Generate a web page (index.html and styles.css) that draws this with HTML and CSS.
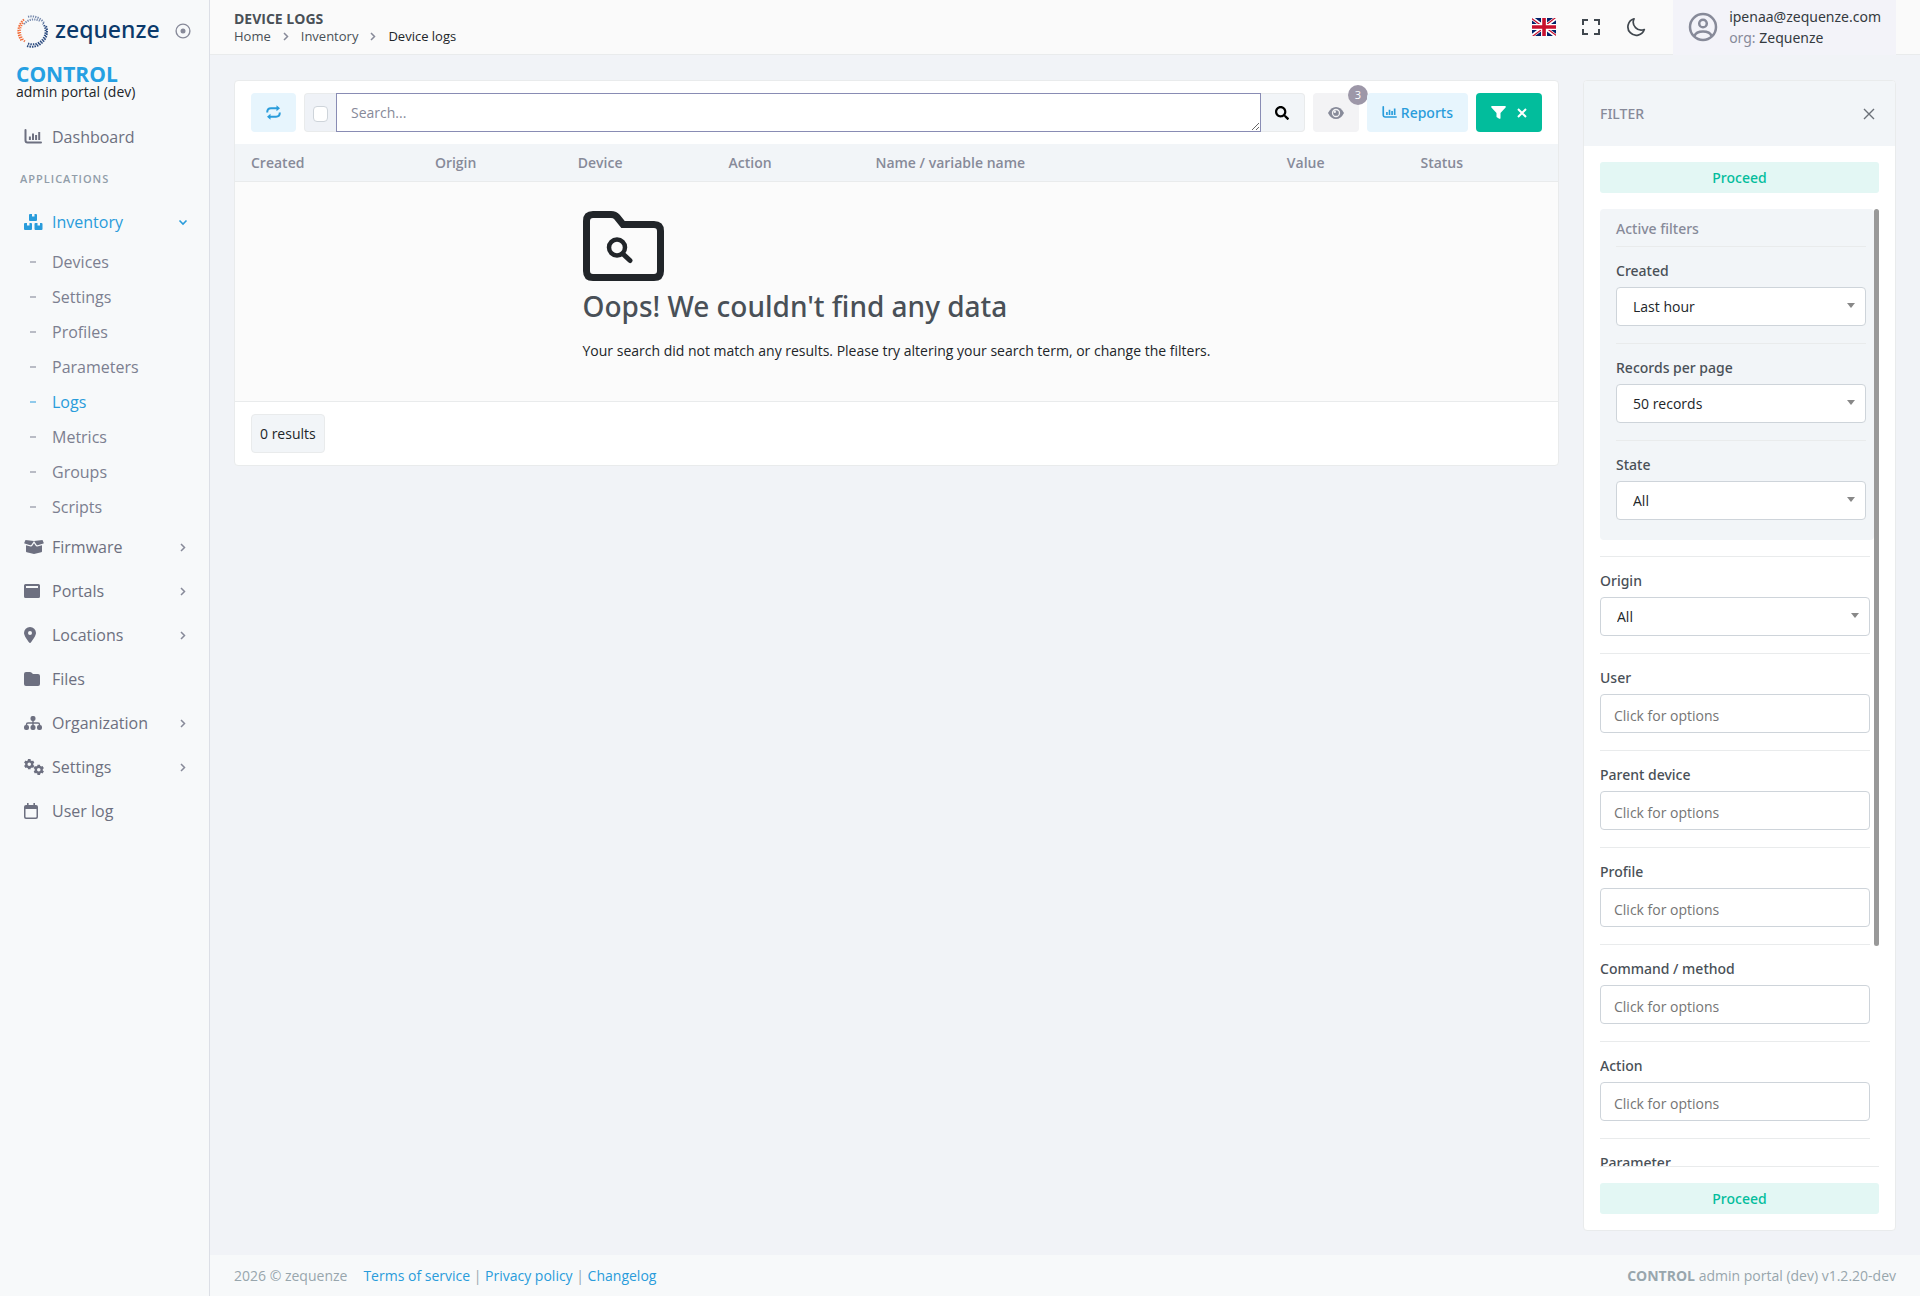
FILE: index.html
```html
<!DOCTYPE html>
<html lang="en">
<head>
<meta charset="utf-8">
<meta name="viewport" content="width=device-width, initial-scale=1">
<title>Device logs - CONTROL admin portal</title>
<link rel="stylesheet" href="styles.css">
</head>
<body>
<svg class="sprite" aria-hidden="true">
  <symbol id="chart" viewBox="0 0 18 16"><path d="M1.500 1v10.500a2 2 0 0 0 2 2H17" fill="none" stroke="currentColor" stroke-width="2" stroke-linecap="round"/><path d="M5.900 11V7.500M9 11V4.500M12.100 11V6M15.200 11V3" fill="none" stroke="currentColor" stroke-width="2"/></symbol>
  <symbol id="chev" viewBox="0 0 6 9"><path d="M1 1l3.500 3.500L1 8" fill="none" stroke="currentColor" stroke-width="1.500"/></symbol>
  <symbol id="loupe" viewBox="0 0 512 512"><path fill="currentColor" d="M505 442.700L405.300 343c-4.500-4.500-10.600-7-17-7H372c27.600-35.300 44-79.700 44-128C416 93.100 322.900 0 208 0S0 93.100 0 208s93.100 208 208 208c48.300 0 92.700-16.400 128-44v16.300c0 6.400 2.500 12.500 7 17l99.700 99.700c9.400 9.400 24.600 9.400 33.900 0l28.300-28.300c9.400-9.400 9.400-24.600.1-34zM208 336c-70.700 0-128-57.200-128-128 0-70.700 57.200-128 128-128 70.700 0 128 57.200 128 128 0 70.700-57.200 128-128 128z"/></symbol>
  <symbol id="gear" viewBox="0 0 10 10"><circle cx="5" cy="5" r="2.800" fill="none" stroke="currentColor" stroke-width="2.200"/><path d="M5 0v2M5 8v2M.7 2.500l1.700 1M7.600 6.500l1.700 1M.7 7.500l1.700-1M7.600 3.500l1.700-1" stroke="currentColor" stroke-width="2.600"/></symbol>
</svg>
<div class="app">
  <aside class="sidebar">
    <div class="brand">
      <a class="logo" href="#">
        <svg width="33" height="33" viewBox="0 0 33 33" fill="none" aria-hidden="true">
          <g stroke="#f26a35"><path d="M8 4.500A15 15 0 0 0 6 26" stroke-width="2" stroke-dasharray="1.500 .9"/><path d="M7 8a13 13 0 0 0 2 18.500" stroke-width="2" stroke-dasharray="1.200 1.200"/></g>
          <g stroke="#2c4c80"><path d="M12 28.500a13 13 0 0 0 15-20" stroke-width="2" stroke-dasharray="1.400 1.100"/><path d="M11 31A15.300 15.300 0 0 0 30 11" stroke-width="2" stroke-dasharray="1.500 1"/></g>
          <g stroke="#7488ac"><path d="M12 1.800a15 15 0 0 1 16 6" stroke-width="2" stroke-dasharray="1.300 1.100"/><path d="M8 9A12.800 12.800 0 0 1 24 6" stroke-width="2" stroke-dasharray="1.200 1.100"/></g>
        </svg>
        <span class="wordmark">zequenze</span>
      </a>
      <button class="plain pin" type="button" aria-label="Pin menu"><svg width="16" height="16" viewBox="0 0 16 16"><circle cx="8" cy="8" r="6.900" fill="none" stroke="currentColor" stroke-width="1.400"/><circle cx="8" cy="8" r="2.500" fill="currentColor"/></svg></button>
    </div>
    <div class="product"><strong>CONTROL</strong><span>admin portal (dev)</span></div>
    <nav class="menu" aria-label="Main">
      <a class="item" href="#"><span class="ico"><svg width="18" height="16"><use href="#chart"/></svg></span>Dashboard</a>
      <div class="section">APPLICATIONS</div>
      <a class="item active" href="#"><span class="ico"><svg width="20" height="16" viewBox="0 0 20 16" fill="currentColor"><path d="M6 0h2v2.500h2.500V0h1.500q1 0 1 1v5q0 1-1 1H6q-1 0-1-1V1q0-1 1-1zM1 9h2v2.500h2.500V9H7q1 0 1 1v5q0 1-1 1H1q-1 0-1-1v-5q0-1 1-1zM11.500 9h2v2.500H16V9h1.500q1 0 1 1v5q0 1-1 1h-6q-1 0-1-1v-5q0-1 1-1z"/></svg></span>Inventory<svg class="arrow" width="10" height="7" viewBox="0 0 10 7"><path d="M1.500 1.500L5 5l3.500-3.500" fill="none" stroke="currentColor" stroke-width="1.600"/></svg></a>
      <ul class="sub">
        <li><a href="#">Devices</a></li><li><a href="#">Settings</a></li><li><a href="#">Profiles</a></li><li><a href="#">Parameters</a></li><li><a class="active" href="#">Logs</a></li><li><a href="#">Metrics</a></li><li><a href="#">Groups</a></li><li><a href="#">Scripts</a></li>
      </ul>
      <a class="item" href="#"><span class="ico"><svg width="20" height="14" viewBox="0 0 20 14" fill="currentColor"><path d="M1.500 0L10 1 7.500 4.800q-.4.600-1.100.4L.6 3.600Q0 3.400.3 2.800zM18.500 0L10 1l2.500 3.800q.4.600 1.100.4l5.800-1.600q.6-.2.300-.8zM2 5.200l4.700 1.200q1 .2 1.600-.6L10 3.200l1.700 2.600q.6.800 1.600.6L18 5.200v6q0 .8-.8 1L10 14l-7.200-1.800q-.8-.2-.8-1z"/></svg></span>Firmware<svg class="arrow" width="6" height="9"><use href="#chev"/></svg></a>
      <a class="item" href="#"><span class="ico"><svg width="16" height="14" viewBox="0 0 16 14" fill="currentColor" fill-rule="evenodd"><path d="M1.500 0h13Q16 0 16 1.500v11q0 1.500-1.500 1.500h-13Q0 14 0 12.500v-11Q0 0 1.500 0zM2 2v2h12V2z"/></svg></span>Portals<svg class="arrow" width="6" height="9"><use href="#chev"/></svg></a>
      <a class="item" href="#"><span class="ico"><svg width="12" height="16" viewBox="0 0 12 16" fill="currentColor" fill-rule="evenodd"><path d="M6 0a6 6 0 0 1 6 6c0 2.700-3.600 7.500-5.200 9.600q-.8.900-1.600 0C3.600 13.500 0 8.700 0 6a6 6 0 0 1 6-6zm0 4a2 2 0 1 0 0 4 2 2 0 0 0 0-4z"/></svg></span>Locations<svg class="arrow" width="6" height="9"><use href="#chev"/></svg></a>
      <a class="item" href="#"><span class="ico"><svg width="16" height="14" viewBox="0 0 16 14" fill="currentColor"><path d="M2 0h4q.8 0 1.400.6L9 2h5q2 0 2 2v8q0 2-2 2H2q-2 0-2-2V2q0-2 2-2z"/></svg></span>Files</a>
      <a class="item" href="#"><span class="ico"><svg width="18" height="14" viewBox="0 0 18 14" fill="currentColor"><rect x="6.500" width="5" height="5" rx="2"/><rect y="9" width="5" height="5" rx="2"/><rect x="6.500" y="9" width="5" height="5" rx="2"/><rect x="13" y="9" width="5" height="5" rx="2"/><path d="M9 4v6M2.500 10V8.500q0-1.500 1.500-1.500h10q1.500 0 1.500 1.500V10" fill="none" stroke="currentColor" stroke-width="1.400"/></svg></span>Organization<svg class="arrow" width="6" height="9"><use href="#chev"/></svg></a>
      <a class="item" href="#"><span class="ico"><svg width="20" height="16" viewBox="0 0 20 16"><use href="#gear" width="10.500" height="10.500"/><use href="#gear" x="9.500" y="5.500" width="10.500" height="10.500"/></svg></span>Settings<svg class="arrow" width="6" height="9"><use href="#chev"/></svg></a>
      <a class="item" href="#"><span class="ico"><svg width="14" height="16" viewBox="0 0 14 16" fill="currentColor" fill-rule="evenodd"><path d="M3 0h1.600v2h4.800V0H11v2h1q2 0 2 2v10q0 2-2 2H2q-2 0-2-2V4q0-2 2-2h1zM1.500 6v7.700q0 .8.800.8h9.400q.8 0 .8-.8V6z"/></svg></span>User log</a>
    </nav>
  </aside>
  <div class="main">
    <header class="topbar">
      <div class="crumb-box">
        <h1>DEVICE LOGS</h1>
        <nav class="crumbs" aria-label="Breadcrumb"><a href="#">Home</a><svg width="6" height="9"><use href="#chev"/></svg><a href="#">Inventory</a><svg width="6" height="9"><use href="#chev"/></svg><span>Device logs</span></nav>
      </div>
      <div class="tools">
        <button class="plain" type="button" aria-label="Language"><svg width="24" height="18" viewBox="0 0 640 480"><path fill="#012169" d="M0 0h640v480H0z"/><path fill="#FFF" d="m75 0 244 181L562 0h78v62L400 241l240 178v61h-80L320 301 81 480H0v-60l239-178L0 64V0h75z"/><path fill="#C8102E" d="m424 281 216 159v40L369 281h55zm-184 20 6 35L54 480H0l240-179zM640 0v3L391 191l2-44L590 0h50zM0 0l239 176h-60L0 42V0z"/><path fill="#FFF" d="M241 0v480h160V0H241zM0 160v160h640V160H0z"/><path fill="#C8102E" d="M0 193v96h640v-96H0zM273 0v480h96V0h-96z"/></svg></button>
        <button class="plain" type="button" aria-label="Full screen"><svg width="18" height="18" viewBox="0 0 18 18" fill="none" stroke="currentColor" stroke-width="2"><path d="M1 7V2h5M12 2h5v5M17 11v5h-5M6 16H1v-5"/></svg></button>
        <button class="plain" type="button" aria-label="Dark mode"><svg width="20" height="20" viewBox="0 0 20 20" fill="none" stroke="currentColor" stroke-width="1.700" stroke-linejoin="round"><path d="M8 1.800A8.400 8.400 0 1 0 18.300 12.500 8 8 0 0 1 8 1.800z"/></svg></button>
      </div>
      <button class="plain user" type="button">
        <svg width="30" height="30" viewBox="0 0 30 30" fill="none" stroke="currentColor" stroke-width="2.500"><circle cx="15" cy="15" r="13"/><circle cx="15" cy="11.500" r="3.800"/><path d="M6.500 24q1.500-4.500 8.500-4.500t8.500 4.500"/></svg>
        <span class="who"><span>ipenaa@zequenze.com</span><span><small>org:</small> Zequenze</span></span>
      </button>
    </header>
    <main class="content">
      <section class="card logs">
        <div class="toolbar">
          <button class="btn soft-info" type="button" aria-label="Refresh"><svg width="15" height="15" viewBox="0 0 15 15"><path d="M1.200 7.500Q1.200 3.300 5 3.300h7M13.800 7.500q0 4.200-3.800 4.200H3" fill="none" stroke="currentColor" stroke-width="2"/><path d="M10.500.3v6L14 3.300zM4.500 8.700v6L1 11.700z" fill="currentColor"/></svg></button>
          <div class="search">
            <label class="addon"><input type="checkbox" aria-label="Advanced search"></label>
            <textarea rows="1" placeholder="Search..." aria-label="Search"></textarea>
            <button class="find" type="button" aria-label="Search"><svg width="14" height="14"><use href="#loupe"/></svg></button>
          </div>
          <button class="btn soft-grey" type="button" aria-label="Visible columns"><svg width="16" height="12" viewBox="0 0 16 12"><path d="M0 6q3-6 8-6t8 6q-3 6-8 6T0 6z" fill="currentColor"/><circle cx="8" cy="6" r="3.500" fill="none" stroke="#f3f3f5" stroke-width="1.300"/><circle cx="6.800" cy="4.800" r="1.200" fill="#f3f3f5"/></svg><span class="badge">3</span></button>
          <button class="btn soft-info reports" type="button"><svg width="15" height="13" viewBox="0 0 18 16" preserveAspectRatio="none"><use href="#chart"/></svg>Reports</button>
          <button class="btn green" type="button" aria-label="Clear filter"><svg width="15" height="13" viewBox="0 0 15 13"><path d="M1 0h13q1.300.3.600 1.400L9.500 7v5.200q-.3 1-1.300.5L5.500 11V7L.4 1.400Q-.3.300 1 0z" fill="currentColor"/></svg><svg width="10" height="10" viewBox="0 0 10 10"><path d="M1 1l8 8M9 1L1 9" stroke="currentColor" stroke-width="2"/></svg></button>
        </div>
        <table>
          <colgroup><col class="c-created"><col class="c-origin"><col class="c-device"><col class="c-action"><col class="c-name"><col class="c-value"><col></colgroup>
          <thead><tr><th>Created</th><th>Origin</th><th>Device</th><th>Action</th><th>Name / variable name</th><th>Value</th><th>Status</th></tr></thead>
          <tbody><tr><td colspan="7"><div class="empty">
            <svg width="81" height="70" viewBox="0 0 81 70" fill="none" stroke="#212529"><path d="M10 3.500h18q4 0 6 2.500l6 7.500h31q6.500 0 6.500 6.500v40q0 6.500-6.500 6.500H10q-6.500 0-6.500-6.500V10q0-6.500 6.500-6.500z" stroke-width="7"/><circle cx="34" cy="36.500" r="8" stroke-width="4.500"/><path d="M40 43l7 6.500" stroke-width="5" stroke-linecap="round"/></svg>
            <h2>Oops! We couldn't find any data</h2>
            <p>Your search did not match any results. Please try altering your search term, or change the filters.</p>
          </div></td></tr></tbody>
        </table>
        <div class="card-foot"><button class="count" type="button">0 results</button></div>
      </section>
      <aside class="card filter">
        <div class="filter-head"><h2>FILTER</h2><button class="plain" type="button" aria-label="Close"><svg width="12" height="12" viewBox="0 0 12 12"><path d="M1 1l10 10M11 1L1 11" stroke="currentColor" stroke-width="1.400"/></svg></button></div>
        <form class="filter-body">
          <button class="proceed" type="button">Proceed</button>
          <div class="scroll-area">
            <div class="scroll">
              <fieldset class="active-set">
                <legend>Active filters</legend>
                <div class="field"><label for="f1">Created</label><select id="f1"><option>Last hour</option></select></div>
                <div class="field"><label for="f2">Records per page</label><select id="f2"><option>50 records</option></select></div>
                <div class="field"><label for="f3">State</label><select id="f3"><option>All</option></select></div>
              </fieldset>
              <div class="fields">
                <div class="field"><label for="f4">Origin</label><select id="f4"><option>All</option></select></div>
                <div class="field"><label for="f5">User</label><input id="f5" type="text" placeholder="Click for options"></div>
                <div class="field"><label for="f6">Parent device</label><input id="f6" type="text" placeholder="Click for options"></div>
                <div class="field"><label for="f7">Profile</label><input id="f7" type="text" placeholder="Click for options"></div>
                <div class="field"><label for="f8">Command / method</label><input id="f8" type="text" placeholder="Click for options"></div>
                <div class="field"><label for="f9">Action</label><input id="f9" type="text" placeholder="Click for options"></div>
                <div class="field"><label for="f10">Parameter</label><input id="f10" type="text" placeholder="Click for options"></div>
              </div>
            </div>
            <div class="track" aria-hidden="true"><div class="thumb"></div></div>
          </div>
          <div class="filter-foot"><button class="proceed" type="button">Proceed</button></div>
        </form>
      </aside>
    </main>
    <footer class="footer">
      <div class="legal"><span>2026 © zequenze</span><span><a href="#">Terms of service</a> | <a href="#">Privacy policy</a> | <a href="#">Changelog</a></span></div>
      <div><strong>CONTROL</strong> admin portal (dev) v1.2.20-dev</div>
    </footer>
  </div>
</div>
</body>
</html>
```
FILE: styles.css
```css
*, *::before, *::after { box-sizing: border-box; }
body {
  margin: 0;
  font: 14px/21px "Open Sans", "Noto Sans", sans-serif;
  color: #212529;
  background: #f1f3f7;
}
h1, h2, p, ul { margin: 0; padding: 0; }
a { color: #299cdb; text-decoration: none; }
button, input, select, textarea { font: inherit; color: inherit; margin: 0; }
button { cursor: pointer; }
svg { display: block; flex: none; }
.sprite { display: none; }
.plain { display: flex; padding: 0; border: 0; background: none; }

/* Medium-weight interface text */
.who, .reports, .proceed, .empty h2, .filter-head h2, .active-set legend, .field label { font-family: "Noto Sans", sans-serif; font-weight: 500; }

.app { display: flex; height: 100vh; }
.main { flex: 1; min-width: 0; display: flex; flex-direction: column; }

/* Sidebar */
.sidebar { width: 210px; flex: none; background: #f7f9fa; border-right: 1px solid #dcdfe6; }
.brand { display: flex; align-items: center; justify-content: space-between; height: 62px; padding: 0 18px 0 16px; }
.logo { display: flex; align-items: center; gap: 6px; }
.wordmark { padding-bottom: 3px; font-family: "Noto Sans", sans-serif; font-size: 23px; font-weight: 500; line-height: 29px; color: #0b3a6b; }
.pin { color: #878a99; }
.product { display: flex; flex-direction: column; padding: 2px 16px 0; line-height: 16px; }
.product strong { font-size: 21px; line-height: 20px; color: #25a0e2; }
.menu { padding-top: 15px; }
.item { display: flex; align-items: center; height: 44px; padding: 0 23px 0 24px; font-size: 16px; line-height: 24px; color: #6d7080; }
.ico { width: 28px; flex: none; }
.arrow { margin-left: auto; color: #878a99; }
.item.active, .sub .active { color: #299cdb; }
.item.active .arrow { color: inherit; margin-right: -2px; }
.section { height: 41px; padding-left: 20px; font-size: 11px; font-weight: 600; line-height: 40px; letter-spacing: 1px; color: #919da9; }
.sub { list-style: none; padding-bottom: 1px; }
.sub a { display: flex; align-items: center; gap: 16px; height: 35px; padding-left: 30px; font-size: 16px; line-height: 24px; color: #7c7f90; }
.sub a::before { content: ""; width: 6px; height: 2px; background: currentColor; opacity: .5; }

/* Top bar */
.topbar { display: flex; height: 55px; flex: none; padding: 0 24px; background: #fafafa; border-bottom: 1px solid #e9ebec; }
.crumb-box { padding-top: 10px; }
.crumb-box h1 { font-size: 14px; font-weight: 700; line-height: 18px; color: #495057; }
.crumbs { display: flex; align-items: center; gap: 12px; font-size: 13px; line-height: 17px; }
.crumbs a { color: #495057; }
.crumbs svg { color: #878a99; }
.tools { display: flex; align-items: center; gap: 26px; margin-left: auto; padding-right: 27px; color: #40474e; }
.user { align-items: center; gap: 11px; margin-bottom: -1px; padding: 0 15px 2px; background: #f3f3f9; color: #878a99; }
.who { display: flex; flex-direction: column; align-items: flex-start; font-weight: 400; color: #343a40; }
.who small { font-size: 14px; color: #878a99; }

/* Content */
.content { flex: 1; min-height: 0; display: flex; align-items: flex-start; gap: 24px; padding: 25px 24px 24px; }
.card { background: #fff; border: 1px solid #e9ebec; border-radius: 4px; }
.logs { flex: 1; min-width: 0; }
.toolbar { display: flex; gap: 8px; padding: 12px 16px; }
.btn { position: relative; display: flex; align-items: center; gap: 4px; height: 39px; padding: 0 15px; border: 0; border-radius: 4px; }
.soft-info { background: #e7f5fd; color: #299cdb; }
.soft-grey { background: #f3f3f5; color: #878a99; }
.green { gap: 11px; background: #02bd9c; color: #fff; }
.badge { position: absolute; top: -8px; right: -9px; width: 20px; height: 20px; border-radius: 10px; background: #9d97a8; color: #fff; font-size: 11px; line-height: 20px; }
.search { flex: 1; display: flex; height: 39px; }
.addon { display: flex; align-items: center; width: 32px; padding: 3px 0 0 8px; border: 1px solid #e9ebec; border-right: 0; border-radius: 4px 0 0 4px; background: #eff2f7; }
.addon input { appearance: none; width: 15px; height: 16px; border: 1px solid #ced4da; border-radius: 4px; background: #fff; }
.search textarea { flex: 1; min-width: 0; padding: 8px 14px; border: 1px solid #898cb4; border-radius: 0; outline: 0; background: #fff; overflow: hidden; }
.search textarea::placeholder { color: #878a99; }
.find { width: 44px; display: grid; place-items: center; border: 1px solid #e9ebec; border-left: 0; border-radius: 0 4px 4px 0; background: #f2f5f8; color: #000; }
table { width: 100%; border-collapse: collapse; table-layout: fixed; }
.c-created { width: 13.900%; }
.c-origin { width: 10.800%; }
.c-device { width: 11.400%; }
.c-action { width: 11.100%; }
.c-name { width: 31.100%; }
.c-value { width: 10.100%; }
th { padding: 8px 16px; text-align: left; font-weight: 600; color: #878a99; background: #f2f5f8; border-bottom: 1px solid #e9ebec; }
td { padding: 0; background: #fbfbfb; border-bottom: 1px solid #e9ebec; }
.empty { width: max-content; margin: 0 auto; padding: 29px 0 40px; }
.empty h2 { margin: 8px 0 17px; font-size: 28px; line-height: 34px; color: #495057; }
.card-foot { padding: 12px 16px; }
.count { height: 39px; padding: 0 8px; border: 1px solid #e9ebec; border-radius: 4px; background: #f2f5f8; }

/* Filter panel */
.filter { width: 313px; flex: none; height: 100%; display: flex; flex-direction: column; overflow: hidden; }
.filter-head { display: flex; align-items: center; justify-content: space-between; height: 65px; flex: none; padding: 0 20px 0 16px; background: #f2f5f8; color: #6b7078; }
.filter-head h2 { font-size: 14px; color: #878a99; }
.filter-body { flex: 1; min-height: 0; display: flex; flex-direction: column; padding: 16px; }
.proceed { width: 100%; height: 31px; flex: none; border: 0; border-radius: 3px; background: #e3f7f4; color: #02bd9c; }
.scroll-area { flex: 1; min-height: 0; display: flex; margin-top: 16px; }
.scroll { flex: 1; min-width: 0; overflow-y: auto; scrollbar-width: none; }
.track { width: 5px; flex: none; }
.thumb { height: 77%; border-radius: 3px; background: #999; }
.active-set { min-width: 0; margin: 0; padding: 0 8px 3px 16px; border: 0; border-radius: 4px; background: #f2f5f8; }
.active-set legend { float: left; width: 100%; padding: 9px 0 7px; color: #878a99; }
.active-set .field { clear: both; }
.fields { padding: 16px 4px 220px 0; }
.field { padding: 13px 0 17px; border-top: 1px solid #e9ebec; }
.field label { display: block; margin-bottom: 6px; color: #495057; }
.field select, .field input { display: block; width: 100%; height: 39px; border: 1px solid #ced4da; border-radius: 4px; background: #fff; outline: 0; }
.field select { appearance: none; padding: 0 30px 0 16px; background: #fff url("data:image/svg+xml,%3Csvg xmlns='http://www.w3.org/2000/svg' width='8' height='5'%3E%3Cpath d='M0 0h8L4 5z' fill='%23888'/%3E%3C/svg%3E") no-repeat right 10px top 15px; }
.field input { padding: 3px 13px 0; }
.field input::placeholder { color: #757575; }
.filter-foot { padding-top: 16px; border-top: 1px solid #e9ebec; }

/* Footer */
.footer { display: flex; align-items: center; justify-content: space-between; height: 41px; flex: none; padding: 0 24px; background: #f7f9fa; color: #98a6ad; }
.legal { display: flex; gap: 16px; }
```
